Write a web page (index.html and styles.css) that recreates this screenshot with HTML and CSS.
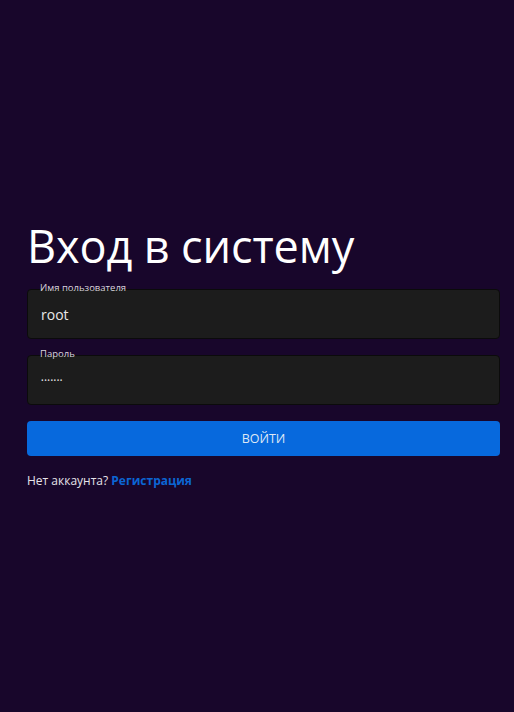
FILE: index.html
```html
<!DOCTYPE html>
<html lang="ru">
<head>
<meta charset="utf-8">
<link rel="stylesheet" href="styles.css">
</head>
<body>
<main class="page">
  <form class="login">
    <h1 class="title">Вход в систему</h1>
    <div class="field">
      <span class="field-label">Имя пользователя</span>
      <div class="field-box"><span class="field-value">root</span></div>
    </div>
    <div class="field">
      <span class="field-label">Пароль</span>
      <div class="field-box"><span class="field-value dots">•••••••</span></div>
    </div>
    <button type="button" class="submit">ВОЙТИ</button>
    <p class="footer">Нет аккаунта? <a class="link">Регистрация</a></p>
  </form>
</main>
</body>
</html>
```
FILE: styles.css
```css
html, body {
  margin: 0;
  padding: 0;
  background: #18062b;
  font-family: "Open Sans", "Noto Sans", sans-serif;
  color: #ffffff;
}
.page {
  min-height: 712px;
  display: flex;
  flex-direction: column;
  justify-content: center;
  padding: 0 14px 6px 27px;
  box-sizing: border-box;
}
.login {
  display: flex;
  flex-direction: column;
}
.title {
  margin: 0 0 14px 0;
  font-weight: 400;
  font-size: 45px;
  line-height: 58px;
  letter-spacing: -0.1px;
  color: #ffffff;
}
.field {
  position: relative;
  margin-bottom: 16px;
}
.field-label {
  position: absolute;
  left: 13px;
  top: -7px;
  font-size: 9.5px;
  line-height: 12px;
  color: #d8d4dc;
}
.field-box {
  height: 48px;
  background: #1c1c1c;
  border: 1px solid #0b0b0b;
  border-radius: 4px;
  display: flex;
  align-items: center;
  padding: 0 13px;
}
.field-value {
  font-size: 14px;
  color: #e8e8e8;
}
.dots {
  font-size: 7px;
  letter-spacing: 0.5px;
  color: #d8d8d8;
}
.submit {
  margin-top: 0;
  height: 35px;
  border: none;
  border-radius: 4px;
  background: #0769dd;
  color: #dfe8f5;
  font-family: "Open Sans", "Noto Sans", sans-serif;
  font-size: 12.5px;
  font-weight: 400;
  padding: 0;
}
.footer {
  margin: 16px 0 0 0;
  font-size: 12px;
  line-height: 17px;
  color: #e6e3ea;
}
.link {
  color: #0b65d4;
  font-weight: 700;
}
```
